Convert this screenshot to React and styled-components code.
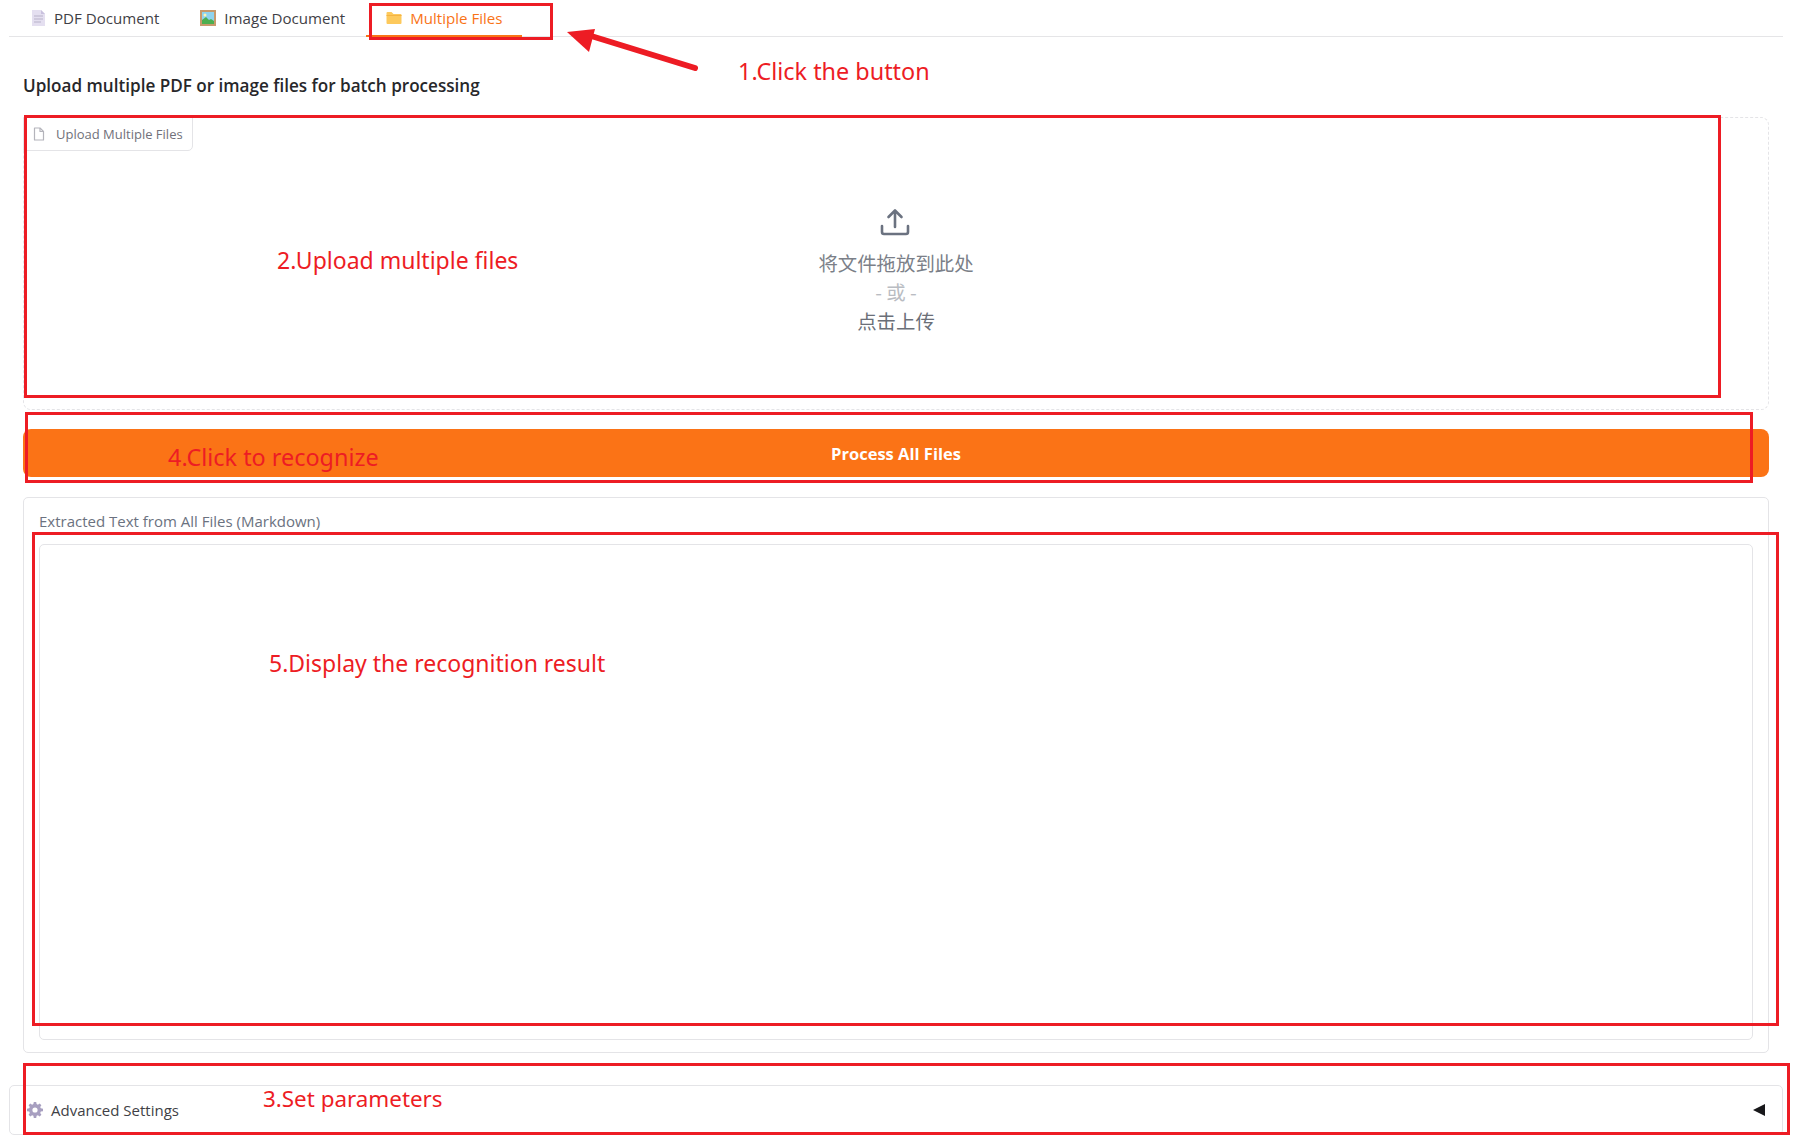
import React from 'react';
import styled, { createGlobalStyle } from 'styled-components';

const Global = createGlobalStyle`
  html, body { margin: 0; padding: 0; background: #fff; }
  body { font-family: "Open Sans", "Noto Sans CJK SC", sans-serif; }
`;

const Page = styled.div`
  position: relative;
  width: 1800px;
  height: 1143px;
  overflow: hidden;
  box-sizing: border-box;
  padding: 0 17px 0 9px;
  color: #27272a;
`;

const TabBar = styled.nav`
  display: flex;
  gap: 2px;
  height: 37px;
  box-sizing: border-box;
  border-bottom: 1px solid #e5e5e7;
  padding-left: 2px;
`;

const Tab = styled.div`
  display: flex;
  align-items: center;
  gap: 7px;
  height: 37px;
  box-sizing: border-box;
  padding: 1px 19px 0;
  font-family: "Open Sans", sans-serif;
  font-size: 15.1px;
  color: ${p => (p.$active ? '#f97316' : '#3f3f46')};
  border-bottom: 2px solid ${p => (p.$active ? '#f97316' : 'transparent')};
`;

const Content = styled.main`
  display: flex;
  flex-direction: column;
  padding: 0 14px;
`;

const Heading = styled.h2`
  margin: 39px 0 21px;
  height: 20px;
  line-height: 20px;
  font-size: 17.1px;
  font-weight: 600;
  color: #27272a;
`;

const Dropzone = styled.section`
  position: relative;
  height: 293px;
  box-sizing: border-box;
  border: 1px dashed #e4e4e7;
  border-radius: 8px;
  display: flex;
  flex-direction: column;
  align-items: center;
  padding-top: 88px;
`;

const FileChip = styled.div`
  position: absolute;
  top: -1px;
  left: -1px;
  display: flex;
  align-items: center;
  gap: 11px;
  height: 34px;
  box-sizing: border-box;
  padding: 0 9px 1px;
  border: 1px solid #e4e4e7;
  border-radius: 0 0 5px 0;
  font-size: 13px;
  color: #71717a;
  background: #fff;
`;

const DropIcon = styled.svg`
  display: block;
  margin-bottom: 10px;
  margin-left: -3px;
`;

const DropLine = styled.div`
  font-family: "Noto Sans CJK SC", sans-serif;
  font-size: 19.4px;
  line-height: 29px;
  color: ${p => p.$color};
`;

const ProcessButton = styled.button`
  display: block;
  margin-top: 19px;
  height: 48px;
  border: 0;
  border-radius: 8px;
  background: #fb7316;
  color: #fff;
  font-family: "Open Sans", sans-serif;
  font-size: 16.5px;
  font-weight: 700;
`;

const OutputPanel = styled.section`
  margin-top: 20px;
  height: 556px;
  box-sizing: border-box;
  border: 1px solid #e4e4e7;
  border-radius: 5px;
  padding: 13px 15px 12px;
  display: flex;
  flex-direction: column;
`;

const OutputLabel = styled.div`
  height: 20px;
  line-height: 20px;
  font-size: 15px;
  color: #6b7280;
  margin-bottom: 13px;
`;

const OutputBox = styled.div`
  flex: 1;
  border: 1px solid #e4e4e7;
  border-radius: 5px;
`;

const Settings = styled.section`
  margin-top: 32px;
  height: 50px;
  box-sizing: border-box;
  border: 1px solid #e4e4e7;
  border-radius: 5px;
  display: flex;
  align-items: center;
  padding: 0 17px;
  gap: 8px;
  font-size: 15px;
  color: #3f3f46;
`;

const Caret = styled.span`
  margin-left: auto;
  width: 0;
  height: 0;
  border-style: solid;
  border-width: 6px 12px 6px 0;
  border-color: transparent #18181b transparent transparent;
`;

const RedBox = styled.div`
  position: absolute;
  left: ${p => p.$x}px;
  top: ${p => p.$y}px;
  width: ${p => p.$w}px;
  height: ${p => p.$h}px;
  box-sizing: border-box;
  border: 3px solid #ed1c24;
  pointer-events: none;
`;

const Note = styled.div`
  position: absolute;
  left: ${p => p.$x}px;
  top: ${p => p.$y}px;
  font-family: "Noto Sans", sans-serif;
  font-size: ${p => p.$size}px;
  line-height: 32px;
  white-space: nowrap;
  color: #ed1c24;
  pointer-events: none;
`;

const Arrow = styled.svg`
  position: absolute;
  left: 560px;
  top: 24px;
`;

const DocIcon = () => (
  <svg width="17" height="18" viewBox="0 0 17 18">
    <path d="M2 1h9l4 4v12H2z" fill="#e4dff0" />
    <path d="M11 1l4 4h-4z" fill="#c9c1de" />
    <path d="M4 7h9M4 10h9M4 13h7" stroke="#b8b2c9" strokeWidth="1" />
  </svg>
);

const PictureIcon = () => (
  <svg width="18" height="18" viewBox="0 0 18 18">
    <rect x="1" y="1" width="16" height="16" fill="#c79a6b" />
    <rect x="3" y="3" width="12" height="12" fill="#8fd3ee" />
    <path d="M3 15v-4l4-3 3 3 2-1 3 2v3z" fill="#4caf50" />
    <circle cx="6" cy="6" r="1.5" fill="#fff4b0" />
  </svg>
);

const FolderIcon = () => (
  <svg width="18" height="16" viewBox="0 0 17 16">
    <path d="M1 3a1 1 0 0 1 1-1h4l2 2h7a1 1 0 0 1 1 1v8a1 1 0 0 1-1 1H2a1 1 0 0 1-1-1z" fill="#fdc95c" />
    <path d="M1 5h15v1H1z" fill="#f5b342" />
  </svg>
);

const GearIcon = () => (
  <svg width="16" height="16" viewBox="0 0 16 16">
    <path
      fillRule="evenodd"
      fill="#a79fc0"
      d="M6.8 0h2.4l.4 2.1 1.3.6 1.8-1.2 1.7 1.7-1.2 1.8.6 1.3 2.2.4v2.5l-2.2.4-.6 1.3 1.2 1.8-1.7 1.7-1.8-1.2-1.3.6-.4 2.1H6.8l-.4-2.1-1.3-.6-1.8 1.2-1.7-1.7 1.2-1.8-.6-1.3L0 9.2V6.7l2.2-.4.6-1.3-1.2-1.8 1.7-1.7 1.8 1.2 1.3-.6zM8 5.4a2.6 2.6 0 1 0 0 5.2 2.6 2.6 0 0 0 0-5.2z"
    />
  </svg>
);

const ChipFileIcon = () => (
  <svg width="12" height="14" viewBox="0 0 12 14" fill="none" stroke="#b4b4bb" strokeWidth="1.2" strokeLinejoin="round">
    <path d="M1.5 1h5.5l3.5 3.5V13h-9z" />
    <path d="M7 1v3.5h3.5" />
  </svg>
);

const boxes = [
  { x: 369, y: 3, w: 184, h: 37 },
  { x: 24, y: 115, w: 1697, h: 283 },
  { x: 25, y: 412, w: 1728, h: 71 },
  { x: 32, y: 532, w: 1747, h: 494 },
  { x: 23, y: 1063, w: 1767, h: 72 },
];

const notes = [
  { x: 738, y: 55, size: 23.4, text: '1.Click the button' },
  { x: 277, y: 244, size: 23, text: '2.Upload multiple files' },
  { x: 168, y: 441, size: 23.4, text: '4.Click to recognize' },
  { x: 269, y: 647, size: 23, text: '5.Display the recognition result' },
  { x: 263, y: 1083, size: 22.4, text: '3.Set parameters' },
];

export default function App() {
  return (
    <Page>
      <Global />
      <TabBar>
        <Tab><DocIcon />PDF Document</Tab>
        <Tab><PictureIcon />Image Document</Tab>
        <Tab $active><FolderIcon />Multiple Files</Tab>
      </TabBar>
      <Content>
        <Heading>Upload multiple PDF or image files for batch processing</Heading>
        <Dropzone>
          <FileChip><ChipFileIcon />Upload Multiple Files</FileChip>
          <DropIcon width="32" height="32" viewBox="0 0 32 32" fill="none" stroke="#6b7280" strokeWidth="2.6" strokeLinecap="round" strokeLinejoin="round">
            <path d="M16 21V5M9.5 11L16 4.5 22.5 11" />
            <path d="M3 20v6a2 2 0 0 0 2 2h22a2 2 0 0 0 2-2v-6" />
          </DropIcon>
          <DropLine $color="#7b7f88">将文件拖放到此处</DropLine>
          <DropLine $color="#b9bcc2">- 或 -</DropLine>
          <DropLine $color="#6b6f78">点击上传</DropLine>
        </Dropzone>
        <ProcessButton>Process All Files</ProcessButton>
        <OutputPanel>
          <OutputLabel>Extracted Text from All Files (Markdown)</OutputLabel>
          <OutputBox />
        </OutputPanel>
      </Content>
      <Settings>
        <GearIcon />
        Advanced Settings
        <Caret />
      </Settings>
      {boxes.map(b => <RedBox key={b.y} $x={b.x} $y={b.y} $w={b.w} $h={b.h} />)}
      {notes.map(n => <Note key={n.y} $x={n.x} $y={n.y} $size={n.size}>{n.text}</Note>)}
      <Arrow width="150" height="60" viewBox="0 0 150 60">
        <path d="M135 44L28 11" stroke="#ed1c24" strokeWidth="6" strokeLinecap="round" />
        <path d="M7 8L35 5 29 28z" fill="#ed1c24" />
      </Arrow>
    </Page>
  );
}
